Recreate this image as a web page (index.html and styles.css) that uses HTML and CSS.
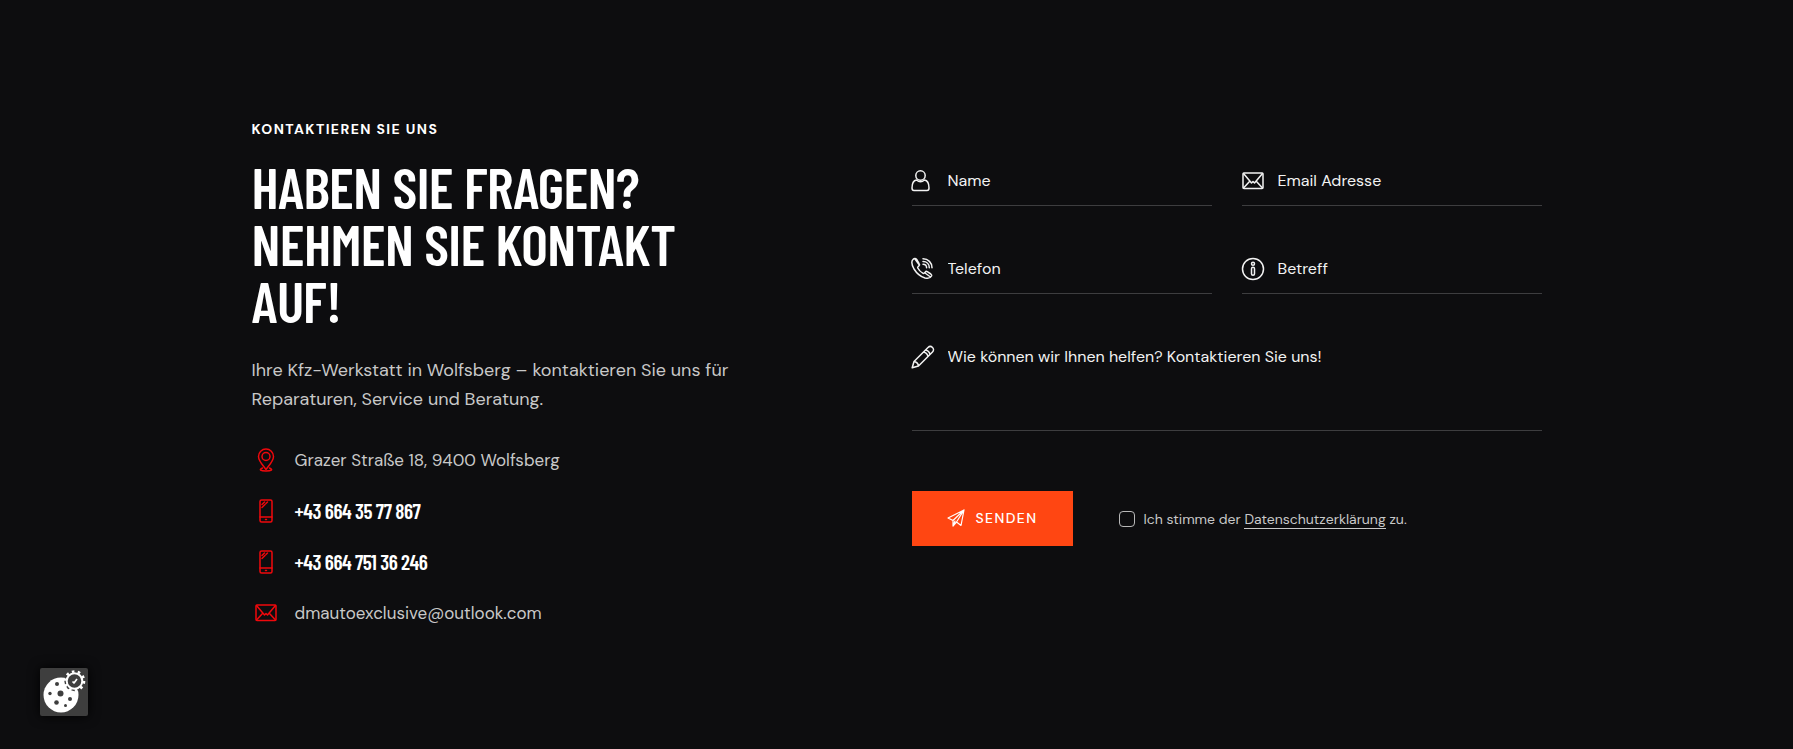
FILE: index.html
```html
<!DOCTYPE html>
<html lang="de">
<head>
<meta charset="utf-8">
<meta name="viewport" content="width=device-width, initial-scale=1">
<title>Kontakt</title>
<link rel="stylesheet" href="styles.css">
</head>
<body>
<svg class="sprite" aria-hidden="true">
  <symbol id="mail" viewBox="0 0 22 18">
    <rect x="1" y="1" width="20" height="15.500" rx="1"/>
    <path d="M1.500 1.500 9.500 11l1.500-1.500L12.500 11l8-9.500M1.500 16l6-6.500M20.500 16l-6-6.500"/>
  </symbol>
  <symbol id="phone" viewBox="0 0 14 24">
    <rect x="1" y="1" width="12" height="22" rx="1.500"/>
    <path d="M1 18h12M6.500 20.500h1M3 5.500 5.500 3M3 8.500 6 5.500M7 4.500 8.500 3"/>
  </symbol>
</svg>
<main class="contact">
  <section class="info">
    <p class="eyebrow">KONTAKTIEREN SIE UNS</p>
    <h2 class="title">HABEN SIE FRAGEN?<br>NEHMEN SIE KONTAKT<br>AUF!</h2>
    <p class="lead">Ihre Kfz-Werkstatt in Wolfsberg – kontaktieren Sie uns für<br>Reparaturen, Service und Beratung.</p>
    <ul class="details">
      <li><svg class="detail-icon" viewBox="0 0 24 24"><path d="M12 21.500C9 17.500 4.500 13 4.500 8.500a7.500 7.500 0 0 1 15 0c0 4.500-4.500 9-7.500 13Z"/><circle cx="12" cy="8.500" r="4"/><path d="M8.500 20c-4 1.500-2 3 3.500 3s7.500-1.500 3.500-3"/></svg><span>Grazer Straße 18, 9400 Wolfsberg</span></li>
      <li><svg class="detail-icon"><use href="#phone"/></svg><a class="tel" href="tel:+436643577867">+43 664 35 77 867</a></li>
      <li><svg class="detail-icon"><use href="#phone"/></svg><a class="tel" href="tel:+4366475136246">+43 664 751 36 246</a></li>
      <li><svg class="detail-icon mail-icon"><use href="#mail"/></svg><a href="mailto:dmautoexclusive@outlook.com">dmautoexclusive@outlook.com</a></li>
    </ul>
  </section>
  <form class="form">
    <label class="field"><svg viewBox="0 0 24 24"><circle cx="9.500" cy="6.500" r="4.700"/><path d="M5.500 11C2.500 11.500 1 14 1 19c0 1.700.7 2.500 2 2.500h13c1.300 0 2-.8 2-2.500 0-5-1.500-7.500-4.500-8-2.500 2.200-5.500 2.200-8 0Z"/></svg><input type="text" placeholder="Name" aria-label="Name"></label>
    <label class="field"><svg class="mail-icon"><use href="#mail"/></svg><input type="email" placeholder="Email Adresse" aria-label="Email Adresse"></label>
    <label class="field"><svg viewBox="0 0 24 24"><path d="M2 2.500C.5 4 .5 7.500 3 12c2.500 4 6 7.500 11 9 3 .8 5.500 0 6.500-2 .3-.8 0-1.500-.7-2l-3.500-2.300c-.8-.5-1.500-.4-2 .3l-1 1c-.5.500-1 .5-1.500.2-2.300-1.300-4-3.200-5-5.200-.2-.5-.1-1 .4-1.400l.8-.8c.6-.6.7-1.200.2-2L5.700 2.500C4.500 1 3.200 1.200 2 2.500ZM4 2l4 5.500M14 16l5.500 4M12 1.800c5.200 0 9 3.800 9 9M12 4.500c3.700 0 6.300 2.600 6.300 6.300M12 7.200c2.200 0 3.600 1.400 3.600 3.600"/></svg><input type="tel" placeholder="Telefon" aria-label="Telefon"></label>
    <label class="field"><svg viewBox="0 0 24 24"><circle cx="12" cy="12" r="10.500"/><circle cx="12" cy="6.800" r="1.500"/><rect x="10.500" y="10.300" width="3" height="8" rx="1.500"/></svg><input type="text" placeholder="Betreff" aria-label="Betreff"></label>
    <label class="field message"><svg viewBox="0 0 24 24"><path d="M1.200 22.800 3 16.500 17 2.500c3-3 7.500 1.500 4.500 4.500l-14 14ZM3 16.500c2.500.3 4 1.700 4.500 4.500M14.500 5c2.500.5 4 2 4.500 4.500M12.500 7c2.500.5 4 2 4.500 4.500"/></svg><textarea placeholder="Wie können wir Ihnen helfen? Kontaktieren Sie uns!" aria-label="Nachricht"></textarea></label>
    <div class="actions">
      <button class="send" type="button"><svg viewBox="0 0 18 18"><path d="M1 9 17 1 14 16.500 9.500 13 6 17V11.500ZM6 11.500 17 1 9.500 13M6 17 8 12"/></svg>SENDEN</button>
      <div class="consent"><input id="privacy" type="checkbox"><label for="privacy">Ich stimme der <a href="#datenschutz">Datenschutzerklärung</a> zu.</label></div>
    </div>
  </form>
</main>
<button class="cookie" type="button" aria-label="Cookie-Einstellungen">
  <svg viewBox="0 0 48 48"><circle cx="21" cy="27" r="17.500" fill="#fff"/><g fill="#3e3e3e"><circle cx="17" cy="16" r="2"/><circle cx="10" cy="25.500" r="1.700"/><circle cx="20.500" cy="25.500" r="3"/><circle cx="30" cy="31" r="2"/><circle cx="16.500" cy="34.500" r="2.300"/><circle cx="25.500" cy="37.500" r="1.500"/><circle cx="34.500" cy="13" r="10.200"/></g><circle cx="34.500" cy="13" r="7.800" fill="none" stroke="#fff" stroke-width="2"/><circle cx="34.500" cy="13" r="9.500" fill="none" stroke="#fff" stroke-width="2.600" stroke-dasharray="2.600 3.369"/><path d="m32.500 13.500 1.500 1.500 3-4" fill="none" stroke="#fff" stroke-width="1.700"/></svg>
</button>
</body>
</html>
```
FILE: styles.css
```css
* { box-sizing: border-box; }
body {
  margin: 0;
  min-height: 100vh;
  background: #0d0d0f;
  color: #fff;
  font-family: "DM Sans", Inter, sans-serif;
  font-optical-sizing: none;
}
.sprite { position: absolute; width: 0; height: 0; }
svg { fill: none; stroke: currentColor; stroke-width: 1.5; stroke-linejoin: round; stroke-linecap: round; flex: none; }
a { color: inherit; text-decoration: none; }
.contact {
  display: grid;
  grid-template-columns: 1fr 1fr;
  gap: 30px;
  max-width: 1290px;
  margin: 0 auto;
  padding-top: 120px;
}
.eyebrow { margin: 0; font-size: 14px; line-height: 19px; font-weight: 700; letter-spacing: 0.1em; }
.title {
  margin: 19px 0 0;
  font-family: "Barlow Condensed", "Roboto Condensed", "Liberation Sans Narrow", sans-serif;
  font-size: 57px;
  line-height: 57px;
  font-weight: 600;
  letter-spacing: -0.01em;
}
.lead { margin: 27px 0 0; font-size: 18px; line-height: 29px; color: #c8c8c8; }
.details { list-style: none; margin: 32px 0 0; padding: 0; display: grid; gap: 23px; font-size: 17px; line-height: 28px; color: #c8c8c8; }
.details li { display: flex; align-items: center; gap: 16px; padding-left: 1px; }
.detail-icon { width: 26px; height: 24px; color: #f0080c; }
.mail-icon { height: 18px; }
.tel { font-family: "Barlow Condensed", "Roboto Condensed", "Liberation Sans Narrow", sans-serif; font-size: 21px; font-weight: 600; letter-spacing: -0.02em; color: #fff; }
.form { display: grid; grid-template-columns: 1fr 1fr; column-gap: 30px; row-gap: 32px; align-content: start; padding-top: 30px; }
.field { display: flex; align-items: center; gap: 13px; height: 56px; border-bottom: 1px solid #3d3d3f; padding-top: 7px; color: #f2f2f2; }
.field svg { width: 24px; height: 24px; margin-left: -1px; }
.field .mail-icon { height: 18px; }
.field input, .field textarea {
  flex: 1; min-width: 0; padding: 0; border: 0; outline: 0; background: none; resize: none;
  font-family: inherit; font-size: 16px; line-height: 24px; color: inherit;
}
.field ::placeholder { color: #f2f2f2; opacity: 1; }
.message { grid-column: 1 / -1; height: 105px; align-items: flex-start; padding-top: 19px; }
.message textarea { height: 80px; }
.actions { grid-column: 1 / -1; display: flex; align-items: center; gap: 46px; padding-top: 28px; }
.send {
  display: flex; align-items: center; justify-content: center; gap: 11px; height: 55px; padding: 0 35px 1px;
  border: 0; background: #ff4612; color: #fff; font-family: inherit; font-size: 14px; font-weight: 500; letter-spacing: 0.1em;
}
.send svg { width: 18px; height: 18px; stroke-width: 1.2; }
.consent { display: flex; align-items: center; gap: 9px; font-size: 14px; color: #c8c8c8; }
.consent input { appearance: none; width: 16px; height: 16px; margin: 0; border: 1px solid #b8b8b8; border-radius: 4px; }
.consent a { border-bottom: 1px solid; }
.cookie { position: fixed; left: 40px; bottom: 33px; width: 48px; height: 48px; padding: 0; border: 0; border-radius: 2px; background: #3e3e3e; box-shadow: 0 0 12px #000; }
.cookie svg { display: block; stroke: none; stroke-linecap: butt; }
```
